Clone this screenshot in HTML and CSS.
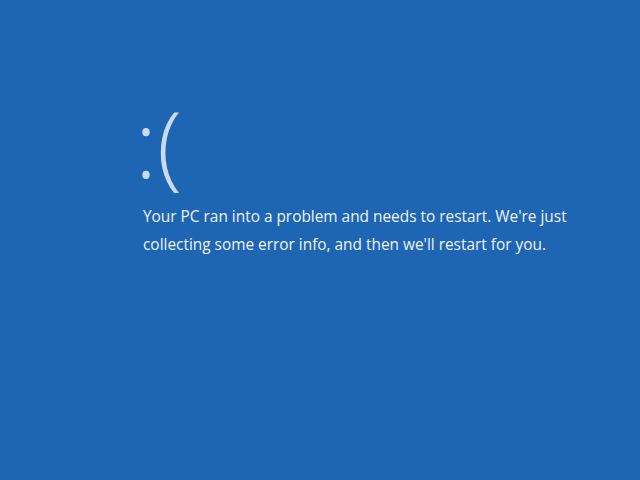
FILE: index.html
```html
<!DOCTYPE html>
<html lang="en">
<head>
    <meta charset="UTF-8">
    <title>Your PC ran into a problem</title>
    <link rel="stylesheet" href="styles.css">
</head>
<body>
    <div class="screen">
        <div class="face">:(</div>
        <p class="message">Your PC ran into a problem and needs to restart. We're just<br>collecting some error info, and then we'll restart for you.</p>
    </div>
</body>
</html>
```

FILE: styles.css
```css
html, body {
    margin: 0;
    height: 100%;
}

body {
    background-color: #1e65b3; /* Windows 8 blue */
    font-family: 'Open Sans', 'Noto Sans', sans-serif;
    color: #eef3fa;
}

.screen {
    padding: 93px 0 0 143px;
}

.face {
    margin-left: -8px;
    font-size: 92px;
    line-height: 100px;
    font-weight: 300;
    color: #c9dbef;
}

.message {
    margin: 10px 0 0 0;
    font-size: 15.4px;
    line-height: 28px;
}
```
